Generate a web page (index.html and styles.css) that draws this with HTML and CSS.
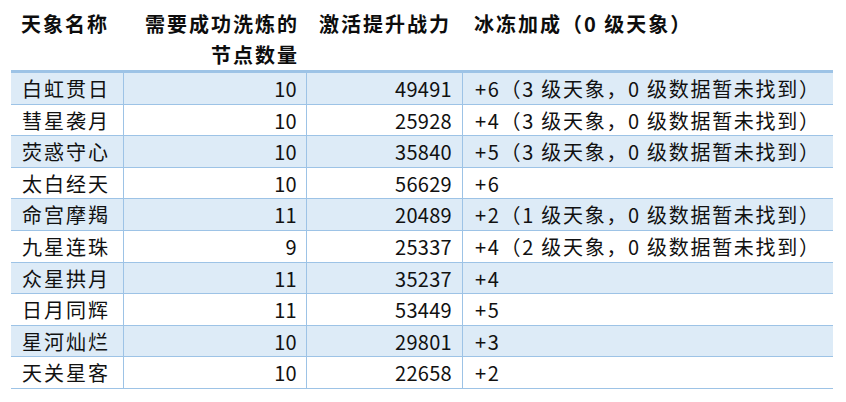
FILE: index.html
```html
<!DOCTYPE html>
<html lang="zh-CN">
<head>
<meta charset="utf-8">
<title>天象</title>
<link rel="stylesheet" href="styles.css">
</head>
<body>
<table class="sheet">
  <colgroup>
    <col class="c1"><col class="c2"><col class="c3"><col class="c4">
  </colgroup>
  <thead>
    <tr>
      <th class="h-name">天象名称</th>
      <th class="h-nodes">需要成功洗炼的<br>节点数量</th>
      <th class="h-power">激活提升战力</th>
      <th class="h-bonus">冰冻加成（0 级天象）</th>
    </tr>
  </thead>
  <tbody>
    <tr class="alt"><td class="name">白虹贯日</td><td class="num n2">10</td><td class="num n3">49491</td><td class="bonus">+6（3 级天象，0 级数据暂未找到）</td></tr>
    <tr><td class="name">彗星袭月</td><td class="num n2">10</td><td class="num n3">25928</td><td class="bonus">+4（3 级天象，0 级数据暂未找到）</td></tr>
    <tr class="alt"><td class="name">荧惑守心</td><td class="num n2">10</td><td class="num n3">35840</td><td class="bonus">+5（3 级天象，0 级数据暂未找到）</td></tr>
    <tr><td class="name">太白经天</td><td class="num n2">10</td><td class="num n3">56629</td><td class="bonus">+6</td></tr>
    <tr class="alt"><td class="name">命宫摩羯</td><td class="num n2">11</td><td class="num n3">20489</td><td class="bonus">+2（1 级天象，0 级数据暂未找到）</td></tr>
    <tr><td class="name">九星连珠</td><td class="num n2">9</td><td class="num n3">25337</td><td class="bonus">+4（2 级天象，0 级数据暂未找到）</td></tr>
    <tr class="alt"><td class="name">众星拱月</td><td class="num n2">11</td><td class="num n3">35237</td><td class="bonus">+4</td></tr>
    <tr><td class="name">日月同辉</td><td class="num n2">11</td><td class="num n3">53449</td><td class="bonus">+5</td></tr>
    <tr class="alt"><td class="name">星河灿烂</td><td class="num n2">10</td><td class="num n3">29801</td><td class="bonus">+3</td></tr>
    <tr><td class="name">天关星客</td><td class="num n2">10</td><td class="num n3">22658</td><td class="bonus">+2</td></tr>
  </tbody>
</table>
</body>
</html>
```
FILE: styles.css
```css
html, body {
  margin: 0;
  padding: 0;
  background: #ffffff;
}

body {
  font-family: "Noto Sans CJK SC", "Noto Sans", sans-serif;
  font-size: 20px;
  color: #111111;
}

.sheet {
  margin: 8px 0 0 11px;
  width: 822px;
  table-layout: fixed;
  border-collapse: separate;
  border-spacing: 0;
}

.c1 { width: 112px; }
.c2 { width: 183px; }
.c3 { width: 156px; }
.c4 { width: 371px; }

.sheet th {
  font-weight: 700;
  line-height: 31px;
  padding: 0;
  vertical-align: top;
  text-align: left;
  letter-spacing: 2px;
  white-space: nowrap;
  border-bottom: 3px solid #9dc3e6;
  color: #0d0d0d;
}

.h-name { padding-left: 10px !important; }
.h-nodes { text-align: right !important; padding-right: 7px !important; }
.h-power { padding-left: 13px !important; }
.h-bonus { padding-left: 12px !important; }

.sheet td {
  padding: 2px 0 0 0;
  line-height: 28.6px;
  border-bottom: 1px solid #9dc3e6;
  white-space: nowrap;
  letter-spacing: 1.7px;
}

.sheet td + td {
  border-left: 1px solid #9dc3e6;
}

.alt td {
  background: #ddebf7;
}

.name {
  padding-left: 11px !important;
  letter-spacing: 2px !important;
}

.num {
  text-align: right;
  letter-spacing: 0.3px !important;
}

.n2 { padding-right: 9px !important; }
.n3 { padding-right: 10px !important; }

.bonus { padding-left: 12px !important; }
```
